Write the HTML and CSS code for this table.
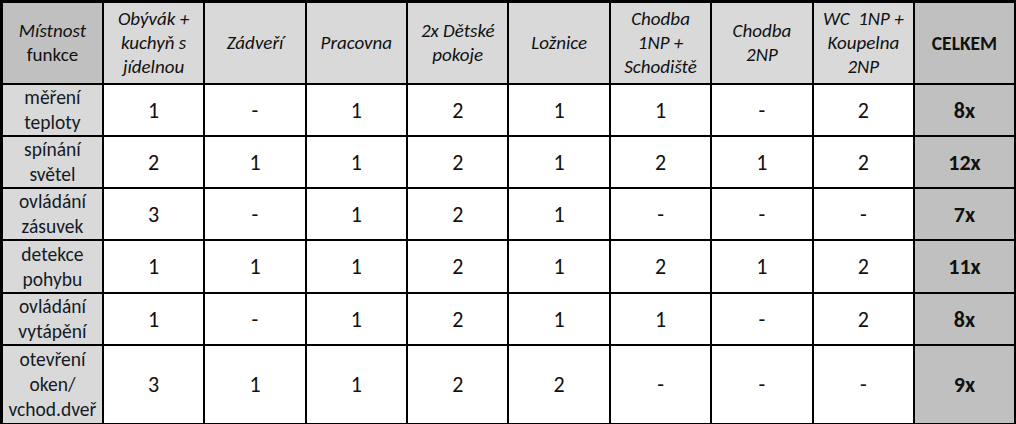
FILE: index.html
```html
<!DOCTYPE html>
<html lang="cs">
<head>
<meta charset="utf-8">
<title>Tabulka funkcí</title>
<link rel="stylesheet" href="styles.css">
</head>
<body>
<table class="grid">
  <colgroup>
    <col class="c"><col class="c"><col class="c"><col class="c"><col class="c">
    <col class="c"><col class="c"><col class="c"><col class="c"><col class="c">
  </colgroup>
  <thead>
    <tr class="head">
      <th class="corner"><em>Místnost</em><br>funkce</th>
      <th><em>Obývák +<br>kuchyň s<br>jídelnou</em></th>
      <th><em>Zádveří</em></th>
      <th><em>Pracovna</em></th>
      <th><em>2x Dětské<br>pokoje</em></th>
      <th><em>Ložnice</em></th>
      <th><em>Chodba<br>1NP +<br>Schodiště</em></th>
      <th><em>Chodba<br>2NP</em></th>
      <th><em>WC &nbsp;1NP +<br>Koupelna<br>2NP</em></th>
      <th class="total-h">CELKEM</th>
    </tr>
  </thead>
  <tbody>
    <tr class="r">
      <th class="fn">měření<br>teploty</th>
      <td>1</td><td>-</td><td>1</td><td>2</td><td>1</td><td>1</td><td>-</td><td>2</td>
      <td class="total">8x</td>
    </tr>
    <tr class="r">
      <th class="fn">spínání<br>světel</th>
      <td>2</td><td>1</td><td>1</td><td>2</td><td>1</td><td>2</td><td>1</td><td>2</td>
      <td class="total">12x</td>
    </tr>
    <tr class="r">
      <th class="fn">ovládání<br>zásuvek</th>
      <td>3</td><td>-</td><td>1</td><td>2</td><td>1</td><td>-</td><td>-</td><td>-</td>
      <td class="total">7x</td>
    </tr>
    <tr class="r r4">
      <th class="fn">detekce<br>pohybu</th>
      <td>1</td><td>1</td><td>1</td><td>2</td><td>1</td><td>2</td><td>1</td><td>2</td>
      <td class="total">11x</td>
    </tr>
    <tr class="r">
      <th class="fn">ovládání<br>vytápění</th>
      <td>1</td><td>-</td><td>1</td><td>2</td><td>1</td><td>1</td><td>-</td><td>2</td>
      <td class="total">8x</td>
    </tr>
    <tr class="r last">
      <th class="fn">otevření<br>oken/<br>vchod.dveř</th>
      <td>3</td><td>1</td><td>1</td><td>2</td><td>2</td><td>-</td><td>-</td><td>-</td>
      <td class="total">9x</td>
    </tr>
  </tbody>
</table>
</body>
</html>
```
FILE: styles.css
```css
html, body {
  margin: 0;
  padding: 0;
  background: #ffffff;
}

body {
  font-family: Carlito, Calibri, Lato, "Noto Sans", sans-serif;
  color: #111111;
}

.grid {
  border-collapse: collapse;
  table-layout: fixed;
  width: 1014px;
  border: 3px solid #000;
}

.grid .c {
  width: 101.4px;
}

.grid th,
.grid td {
  border: 2px solid #000;
  padding: 0;
  text-align: center;
  vertical-align: middle;
  overflow: hidden;
  white-space: nowrap;
}

.head th {
  background: #d9d9d9;
  font-weight: normal;
  font-size: 19px;
  line-height: 24px;
  height: 80px;
  color: #111111;
}

.head th em {
  font-style: italic;
}

.head th.corner {
  background: #c0c0c0;
  font-size: 19px;
}

.head th.total-h {
  background: #c0c0c0;
  font-weight: bold;
  font-size: 19.5px;
}

.r th,
.r td {
  height: 50px;
}

.r4 th,
.r4 td {
  height: 51px;
}

.last th,
.last td {
  height: 77px;
}

.fn {
  background: #d9d9d9;
  font-weight: normal;
  font-size: 19.5px;
  line-height: 25px;
  color: #141a26;
}

.r td {
  background: #ffffff;
  font-size: 22px;
  color: #111;
}

.r td.total {
  background: #c0c0c0;
  font-weight: bold;
  font-size: 22px;
}
```
